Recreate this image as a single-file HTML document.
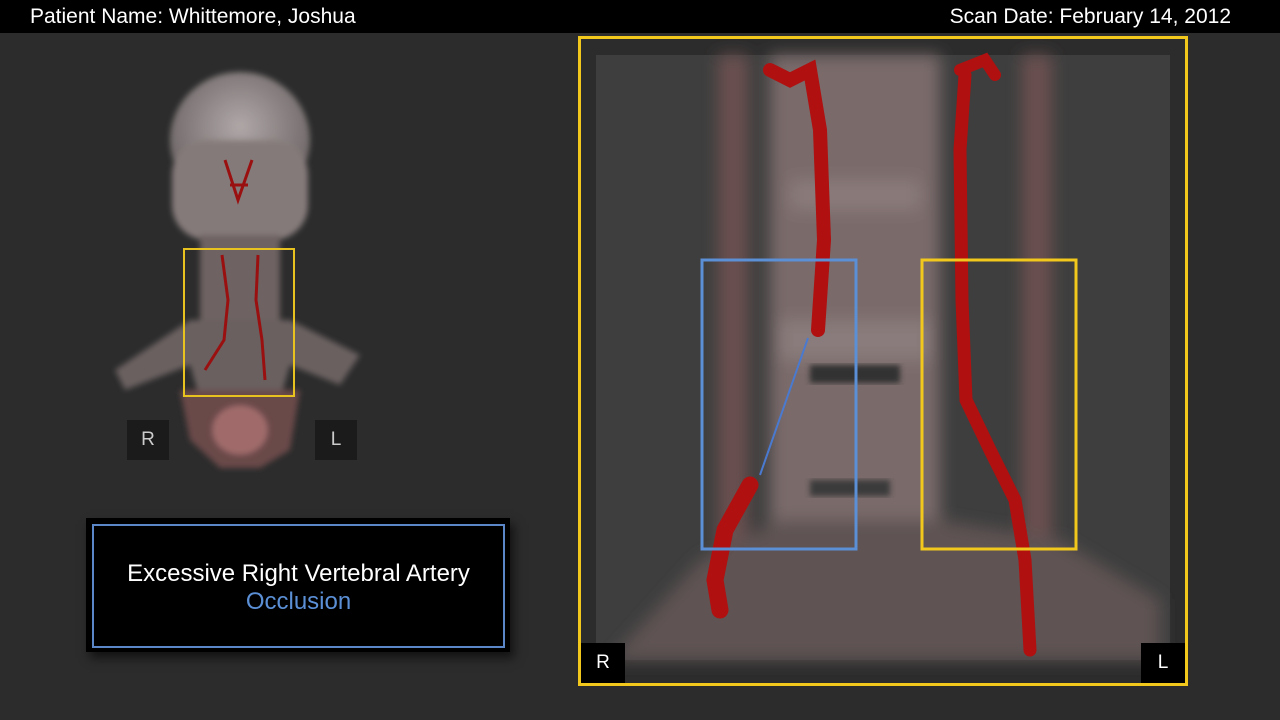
<!DOCTYPE html>
<html><head><style>
body{margin:0;width:1280px;height:720px;overflow:hidden;background:#2c2c2c;font-family:"Liberation Sans",sans-serif;position:relative}
.top{position:absolute;left:0;top:0;width:1280px;height:33px;background:#000;color:#fff;font-size:21px}
.top span{position:absolute;top:5px}
.lbl{position:absolute;background:#1b1b1b;color:#ccc;font-size:19px;text-align:center;line-height:40px;width:42px;height:40px}
.blk{position:absolute;background:#000;color:#fff;font-size:19px;text-align:center;line-height:40px;width:44px;height:40px}
</style></head><body>
<div class="top"><span style="left:30px">Patient Name: Whittemore, Joshua</span><span style="right:49px">Scan Date: February 14, 2012</span></div>

<svg style="position:absolute;left:0;top:0" width="1280" height="720">
<defs>
<radialGradient id="sk" cx="50%" cy="40%" r="60%"><stop offset="0" stop-color="#b0a8a8"/><stop offset="1" stop-color="#6a6262"/></radialGradient>
<filter id="bl"><feGaussianBlur stdDeviation="3"/></filter>
<filter id="bl2"><feGaussianBlur stdDeviation="8"/></filter>
</defs>
<g filter="url(#bl)">
<ellipse cx="240" cy="140" rx="70" ry="68" fill="url(#sk)"/>
<rect x="172" y="140" width="136" height="100" rx="35" fill="#857a7a"/>
<rect x="200" y="235" width="80" height="165" fill="#6e6262"/>
<path d="M115 370 L190 320 L290 320 L360 355 L340 385 L290 365 L280 400 L200 400 L190 365 L125 390Z" fill="#6a6060"/>
<path d="M180 390 L300 390 L290 450 L260 468 L220 468 L190 440Z" fill="#6a4a4a"/>
</g>
<ellipse cx="240" cy="430" rx="28" ry="25" fill="#a06a6a" filter="url(#bl)"/>
<g stroke="#9a1010" stroke-width="3" fill="none">
<path d="M222 255 L228 300 L224 340 L205 370"/><path d="M258 255 L256 300 L262 340 L265 380"/>
<path d="M225 160 L238 200 L252 160 M230 185 L248 185"/>
</g>
<rect x="184" y="249" width="110" height="147" fill="none" stroke="#e8c21e" stroke-width="2"/>

<rect x="596" y="55" width="574" height="605" fill="#3e3e3e"/>
<g filter="url(#bl2)">
<rect x="770" y="55" width="170" height="605" fill="#7a6a6a"/>
<rect x="718" y="55" width="30" height="500" fill="#6a5050"/>
<rect x="1022" y="55" width="30" height="560" fill="#6a5050"/>
<path d="M610 660 L700 560 L780 520 L940 520 L1060 540 L1160 600 L1160 660Z" fill="#5e5252"/>
<rect x="790" y="180" width="130" height="30" fill="#8a7a7a"/>
<rect x="780" y="320" width="150" height="40" fill="#8a7c7c"/>
</g>
<rect x="810" y="365" width="90" height="18" fill="#333" filter="url(#bl)"/>
<rect x="810" y="480" width="80" height="16" fill="#3a3a3a" filter="url(#bl)"/>
<g stroke="#b01010" fill="none" stroke-linecap="round">
<path d="M770 70 L790 80 L810 70 L820 130 L824 240 L818 330" stroke-width="14"/>
<path d="M965 75 L960 150 L962 300 L966 400 L990 450 L1015 500 L1025 560 L1030 650" stroke-width="13"/>
<path d="M960 70 L985 60 L995 75" stroke-width="12"/>
<path d="M750 485 L725 530 L715 580 L720 610" stroke-width="17"/>
</g>
<line x1="808" y1="338" x2="760" y2="475" stroke="#4a7ad0" stroke-width="2"/>
<rect x="702" y="260" width="154" height="289" fill="none" stroke="#5b8fd6" stroke-width="3"/>
<rect x="922" y="260" width="154" height="289" fill="none" stroke="#f2c81c" stroke-width="3"/>
<rect x="579.5" y="37.5" width="607" height="647" fill="none" stroke="#f2c81c" stroke-width="3"/>
</svg>

<div class="lbl" style="left:127px;top:420px">R</div>
<div class="lbl" style="left:315px;top:420px">L</div>
<div class="blk" style="left:581px;top:643px">R</div>
<div class="blk" style="left:1141px;top:643px">L</div>

<div style="position:absolute;left:86px;top:518px;width:424px;height:134px;background:#000;box-shadow:4px 6px 10px rgba(0,0,0,.6)"></div>
<div style="position:absolute;left:92px;top:524px;width:409px;height:120px;border:2px solid #5b86c8;text-align:center;color:#fff;font-size:24px;line-height:28px;box-sizing:content-box">
<div style="margin-top:34px">Excessive Right Vertebral Artery</div>
<div style="color:#5b8fd6">Occlusion</div>
</div>
</body></html>
